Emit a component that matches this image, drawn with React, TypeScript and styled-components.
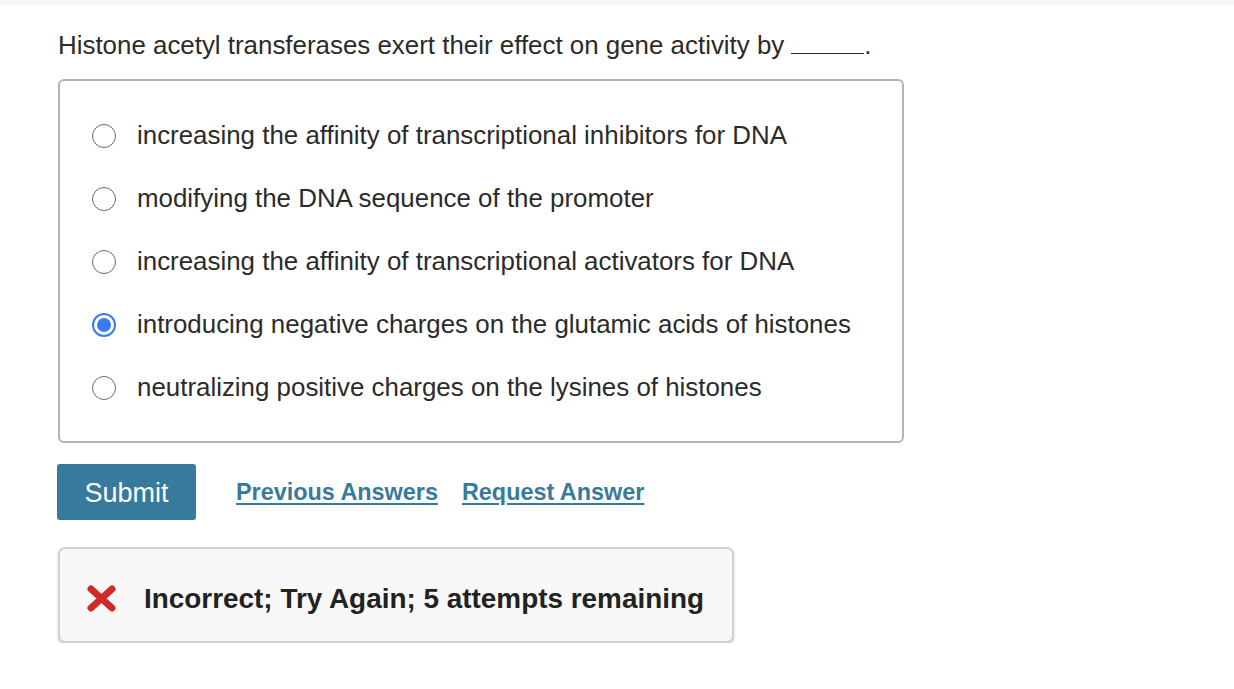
import React, { useState } from "react";
import styled, { createGlobalStyle } from "styled-components";

const GlobalStyle = createGlobalStyle`
  html, body {
    margin: 0;
    padding: 0;
    background: #ffffff;
    font-family: "Liberation Sans", Arial, Helvetica, sans-serif;
    color: #2b2b2b;
  }
`;

const TopStrip = styled.div`
  height: 5px;
  background: #f6f6f6;
`;

const Page = styled.div`
  padding: 26px 0 0 58px;
  display: flex;
  flex-direction: column;
  align-items: flex-start;
`;

const Question = styled.p`
  margin: 0;
  font-size: 25.9px;
  line-height: 28px;
`;

const Blank = styled.span`
  display: inline-block;
  width: 73px;
  border-bottom: 1px solid #2b2b2b;
  margin-left: 7px;
  vertical-align: baseline;
  height: 16px;
`;

const OptionsBox = styled.div`
  margin-top: 20px;
  width: 846px;
  box-sizing: border-box;
  border: 2px solid #b4b4b4;
  border-radius: 6px;
  padding: 23px 0 22px 32px;
  display: flex;
  flex-direction: column;
`;

const OptionRow = styled.label`
  display: flex;
  align-items: center;
  height: 63px;
  font-size: 25.9px;
  cursor: pointer;
`;

const Radio = styled.span<{ $checked: boolean }>`
  width: 24px;
  height: 24px;
  box-sizing: border-box;
  border-radius: 50%;
  border: ${(p) => (p.$checked ? "2px solid #3a7af3" : "1.5px solid #6a6a6a")};
  display: flex;
  align-items: center;
  justify-content: center;
  margin-right: 21px;
  flex-shrink: 0;
  &::after {
    content: "";
    width: 14px;
    height: 14px;
    border-radius: 50%;
    background: ${(p) => (p.$checked ? "#3a7af3" : "transparent")};
  }
`;

const ActionRow = styled.div`
  margin-top: 21px;
  display: flex;
  align-items: center;
`;

const SubmitButton = styled.button`
  width: 139px;
  height: 56px;
  background: #377a9b;
  color: #ffffff;
  border: none;
  border-radius: 3px;
  font-family: inherit;
  font-size: 27px;
  padding-top: 3px;
  margin-left: -1px;
  margin-right: 40px;
  cursor: pointer;
`;

const LinkText = styled.a`
  font-size: 23.4px;
  font-weight: bold;
  color: #377a9b;
  text-decoration: underline;
  text-underline-offset: 3px;
  margin-right: 24px;
  cursor: pointer;
`;

const Feedback = styled.div`
  margin-top: 27px;
  width: 676px;
  height: 96px;
  box-sizing: border-box;
  background: #f8f8f8;
  border: 2px solid #d0d0d0;
  border-radius: 7px;
  box-shadow: 0 2px 3px rgba(0, 0, 0, 0.18);
  display: flex;
  align-items: center;
  padding: 7px 0 0 27px;
`;

const FeedbackText = styled.span`
  font-size: 27.9px;
  font-weight: bold;
  color: #222222;
  margin-left: 28px;
`;

const CrossIcon = () => (
  <svg width="29" height="27" viewBox="0 0 29 27">
    <path
      d="M4 4 L25 23 M25 4 L4 23"
      stroke="#cf2a2a"
      strokeWidth="7"
      strokeLinecap="round"
    />
  </svg>
);

const options = [
  "increasing the affinity of transcriptional inhibitors for DNA",
  "modifying the DNA sequence of the promoter",
  "increasing the affinity of transcriptional activators for DNA",
  "introducing negative charges on the glutamic acids of histones",
  "neutralizing positive charges on the lysines of histones",
];

export default function App() {
  const [selected, setSelected] = useState(3);
  return (
    <>
      <GlobalStyle />
      <TopStrip />
      <Page>
        <Question>
          Histone acetyl transferases exert their effect on gene activity by
          <Blank />.
        </Question>
        <OptionsBox>
          {options.map((o, i) => (
            <OptionRow key={o} onClick={() => setSelected(i)}>
              <Radio $checked={selected === i} />
              {o}
            </OptionRow>
          ))}
        </OptionsBox>
        <ActionRow>
          <SubmitButton>Submit</SubmitButton>
          <LinkText>Previous Answers</LinkText>
          <LinkText>Request Answer</LinkText>
        </ActionRow>
        <Feedback>
          <CrossIcon />
          <FeedbackText>Incorrect; Try Again; 5 attempts remaining</FeedbackText>
        </Feedback>
      </Page>
    </>
  );
}
